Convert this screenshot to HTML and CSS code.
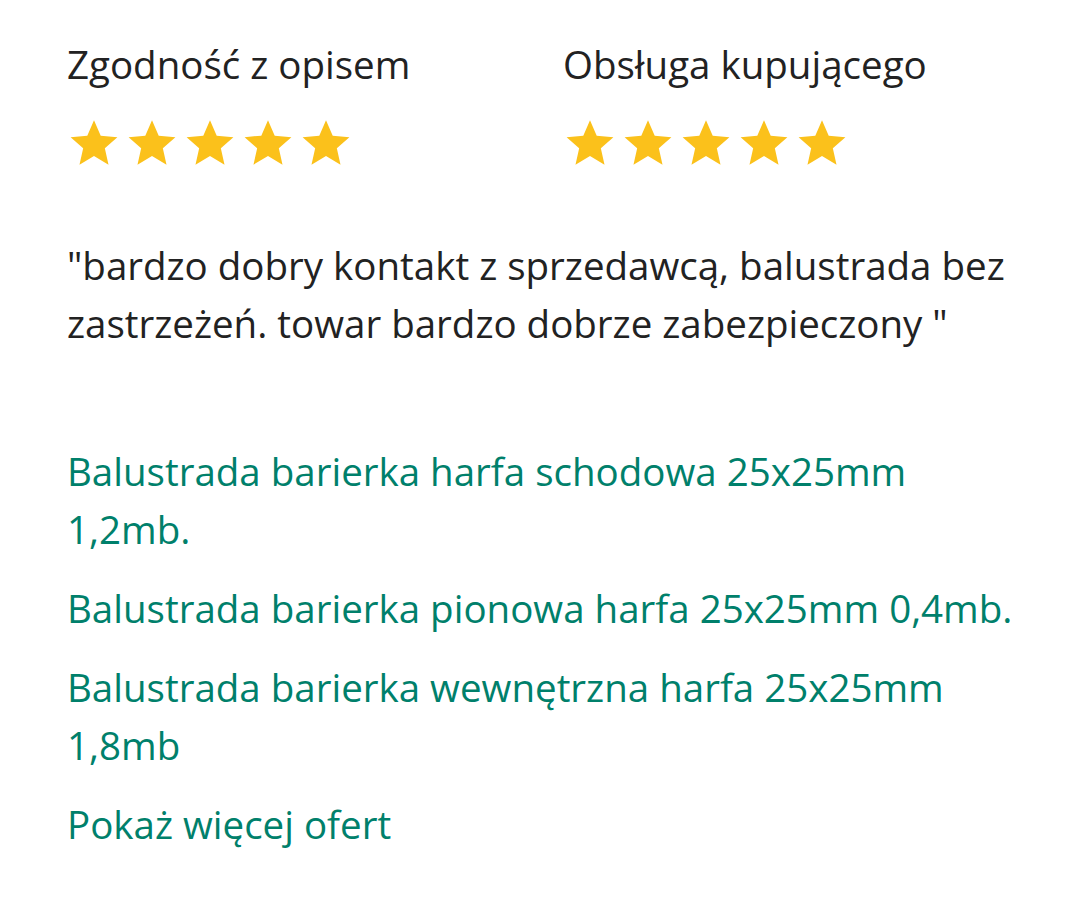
FILE: index.html
```html
<!DOCTYPE html>
<html lang="pl">
<head>
    <meta charset="UTF-8">
    <meta name="viewport" content="width=device-width, initial-scale=1.0">
    <title>Opinia</title>
    <link rel="stylesheet" href="styles.css">
</head>
<body>
    <div class="ratings">
        <div class="rating">
            <div class="rating-title">Zgodność z opisem</div>
            <div class="stars">
                <svg class="star" viewBox="0 0 24 24"><polygon points="12,1.5 15.1,8.6 22.8,9.3 17,14.4 18.7,22 12,18 5.3,22 7,14.4 1.2,9.3 8.9,8.6"/></svg>
                <svg class="star" viewBox="0 0 24 24"><polygon points="12,1.5 15.1,8.6 22.8,9.3 17,14.4 18.7,22 12,18 5.3,22 7,14.4 1.2,9.3 8.9,8.6"/></svg>
                <svg class="star" viewBox="0 0 24 24"><polygon points="12,1.5 15.1,8.6 22.8,9.3 17,14.4 18.7,22 12,18 5.3,22 7,14.4 1.2,9.3 8.9,8.6"/></svg>
                <svg class="star" viewBox="0 0 24 24"><polygon points="12,1.5 15.1,8.6 22.8,9.3 17,14.4 18.7,22 12,18 5.3,22 7,14.4 1.2,9.3 8.9,8.6"/></svg>
                <svg class="star" viewBox="0 0 24 24"><polygon points="12,1.5 15.1,8.6 22.8,9.3 17,14.4 18.7,22 12,18 5.3,22 7,14.4 1.2,9.3 8.9,8.6"/></svg>
            </div>
        </div>
        <div class="rating">
            <div class="rating-title">Obsługa kupującego</div>
            <div class="stars">
                <svg class="star" viewBox="0 0 24 24"><polygon points="12,1.5 15.1,8.6 22.8,9.3 17,14.4 18.7,22 12,18 5.3,22 7,14.4 1.2,9.3 8.9,8.6"/></svg>
                <svg class="star" viewBox="0 0 24 24"><polygon points="12,1.5 15.1,8.6 22.8,9.3 17,14.4 18.7,22 12,18 5.3,22 7,14.4 1.2,9.3 8.9,8.6"/></svg>
                <svg class="star" viewBox="0 0 24 24"><polygon points="12,1.5 15.1,8.6 22.8,9.3 17,14.4 18.7,22 12,18 5.3,22 7,14.4 1.2,9.3 8.9,8.6"/></svg>
                <svg class="star" viewBox="0 0 24 24"><polygon points="12,1.5 15.1,8.6 22.8,9.3 17,14.4 18.7,22 12,18 5.3,22 7,14.4 1.2,9.3 8.9,8.6"/></svg>
                <svg class="star" viewBox="0 0 24 24"><polygon points="12,1.5 15.1,8.6 22.8,9.3 17,14.4 18.7,22 12,18 5.3,22 7,14.4 1.2,9.3 8.9,8.6"/></svg>
            </div>
        </div>
    </div>

    <p class="comment">"bardzo dobry kontakt z sprzedawcą, balustrada bez zastrzeżeń. towar bardzo dobrze zabezpieczony "</p>

    <ul class="offers">
        <li><a href="#">Balustrada barierka harfa schodowa 25x25mm 1,2mb.</a></li>
        <li><a href="#">Balustrada barierka pionowa harfa 25x25mm 0,4mb.</a></li>
        <li><a href="#">Balustrada barierka wewnętrzna harfa 25x25mm 1,8mb</a></li>
        <li><a href="#">Pokaż więcej ofert</a></li>
    </ul>
</body>
</html>
```

FILE: styles.css
```css
body {
    font-family: "Open Sans", "Noto Sans", sans-serif;
    font-size: 38.5px;
    line-height: 58px;
    color: #222;
    background-color: #fff;
    margin: 0;
    padding: 35px 67px 0;
}
.ratings {
    display: grid;
    grid-template-columns: 496px 1fr;
}
.rating-title {
    color: #222;
}
.stars {
    display: flex;
    gap: 6px;
    margin-top: 24px;
    margin-left: 1px;
}
.star {
    width: 52px;
    height: 52px;
    fill: #fbc11b;
}
.comment {
    margin: 67px 0 0;
}
.offers {
    list-style: none;
    margin: 90px 0 0;
    padding: 0;
}
.offers li {
    margin-bottom: 21px;
}
.offers a {
    color: #00806b;
    text-decoration: none;
}
```
